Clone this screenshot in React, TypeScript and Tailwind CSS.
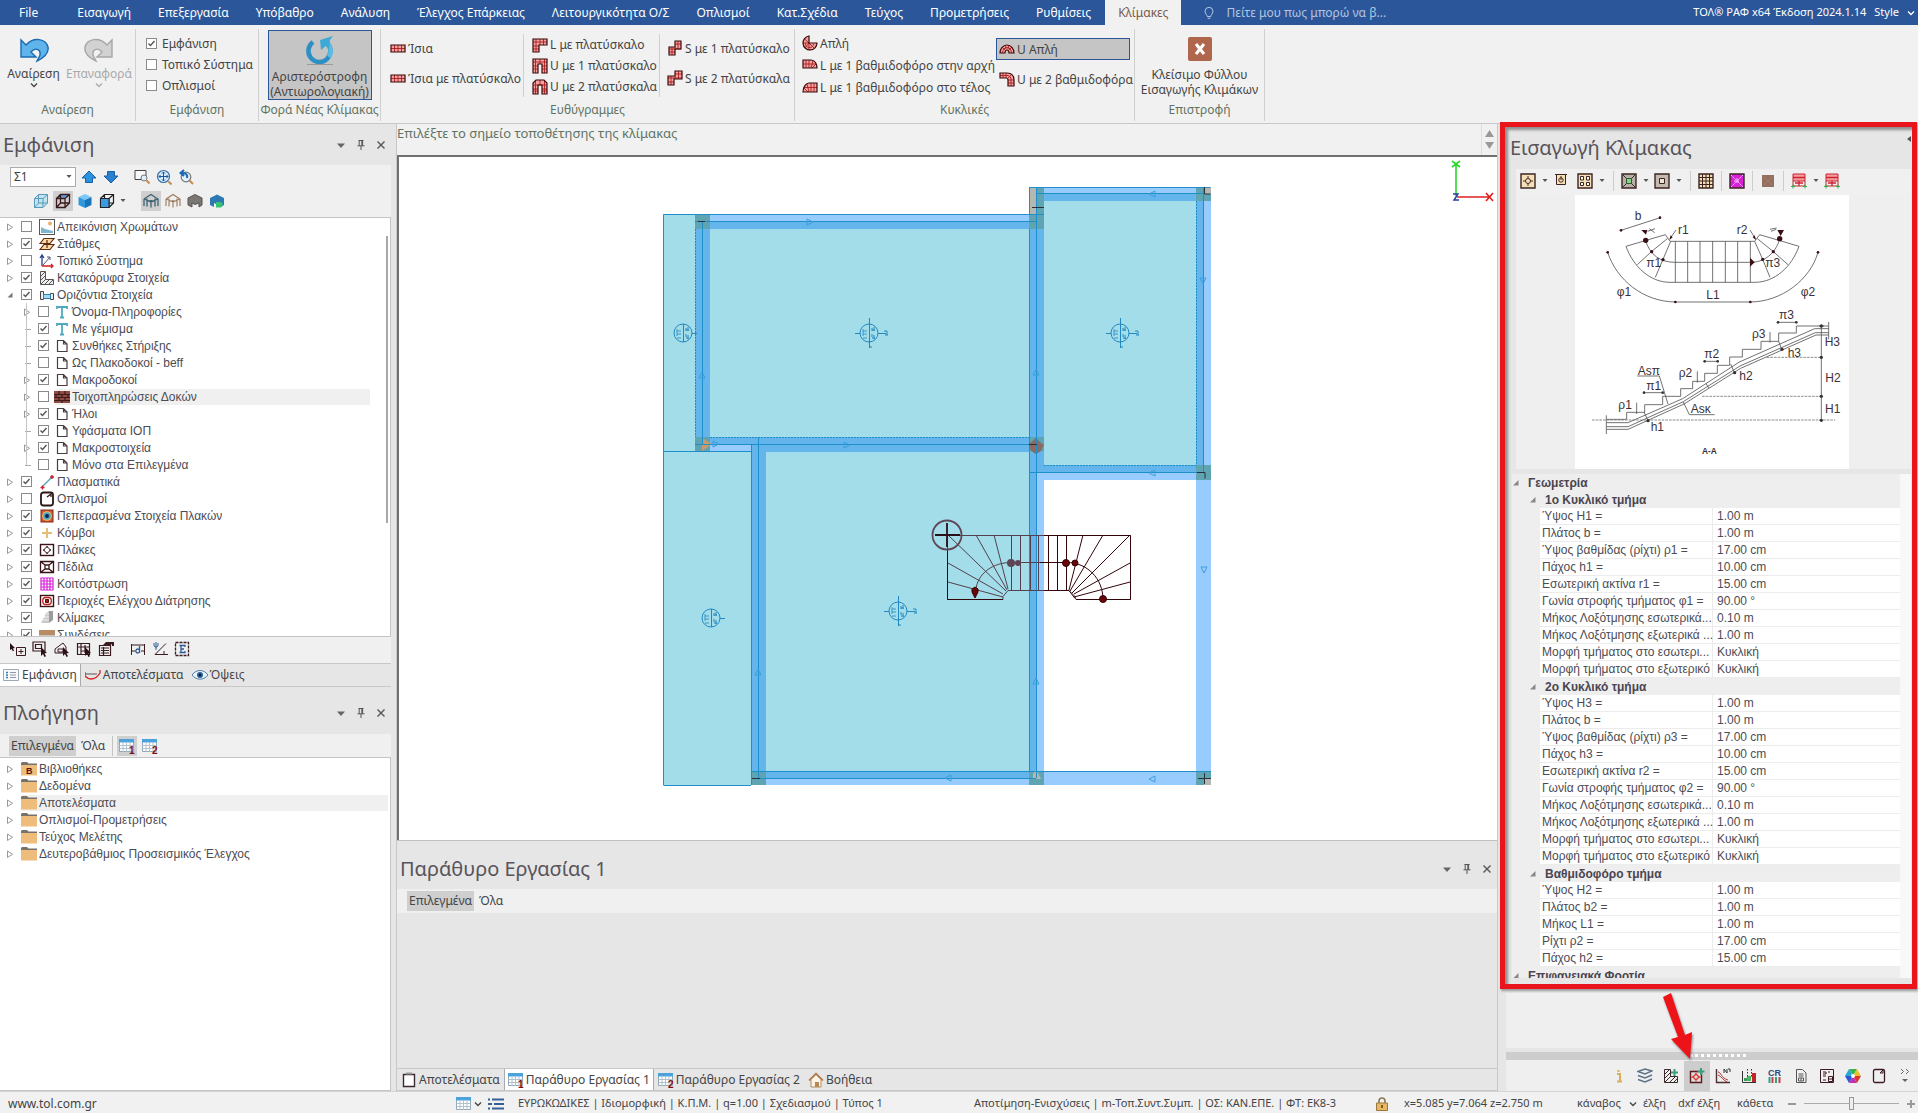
import { useState } from 'react';
import type { ReactNode } from 'react';

type IconProps = {
  children: ReactNode;
  size?: string;
  box?: string;
};

function Icon({ children, size = 'h-4 w-4', box = '0 0 16 16' }: IconProps) {
  return (
    <svg viewBox={box} className={`${size} shrink-0`} fill="none" aria-hidden="true">
      {children}
    </svg>
  );
}

/* ---------- small shared pieces ---------- */

function Chevron() {
  return (
    <Icon size="h-2 w-2" box="0 0 8 8">
      <path d="M1 2.500 4 5.500 7 2.500" stroke="currentColor" strokeWidth="1.3" />
    </Icon>
  );
}

function Caret() {
  return (
    <Icon size="h-1 w-2" box="0 0 8 4">
      <path d="M1.500 0h5L4 3z" fill="#555" />
    </Icon>
  );
}

function Tick({ label, checked, children }: { label: string; checked: boolean; children?: ReactNode }) {
  const [on, setOn] = useState(checked);
  return (
    <label className="flex items-center whitespace-nowrap">
      <span className="relative mr-[5px] block h-[11px] w-[11px] shrink-0">
        <input
          type="checkbox"
          checked={on}
          onChange={() => setOn(!on)}
          className="peer block h-[11px] w-[11px] appearance-none border border-[#8a8a8a] bg-white"
        />
        <svg
          viewBox="0 0 11 11"
          className="pointer-events-none absolute inset-0 hidden h-[11px] w-[11px] peer-checked:block"
          fill="none"
        >
          <path d="M2.500 5.500 4.500 7.500 8.500 3" stroke="#555" strokeWidth="1.4" />
        </svg>
      </span>
      {children}
      {label}
    </label>
  );
}

function PanelTitle({ title, height }: { title: string; height: string }) {
  return (
    <header className={`flex shrink-0 items-center justify-between bg-[#e6e6e6] pr-1 pl-[3px] ${height}`}>
      <h2 className="text-[20px] leading-6 text-[#58545a]">{title}</h2>
      <div className="flex items-center gap-2 text-[#555]">
        <button type="button" aria-label="Μενού">
          <Icon size="h-3 w-3" box="0 0 12 12">
            <path d="M2 4.500h8L6 9z" fill="#666" />
          </Icon>
        </button>
        <button type="button" aria-label="Καρφίτσωμα">
          <Icon size="h-3 w-3" box="0 0 12 12">
            <path d="M3.500 1.500h5M4.200 1.500v5.200M7.600 1.500v5.200M6.800 1.500v5.200M2.500 6.800h7M6 7v4" stroke="#555" />
          </Icon>
        </button>
        <button type="button" aria-label="Κλείσιμο">
          <Icon size="h-3 w-3" box="0 0 12 12">
            <path d="m2.500 2.500 7 7m0-7-7 7" stroke="#555" strokeWidth="1.4" />
          </Icon>
        </button>
      </div>
    </header>
  );
}

/* ---------- ribbon ---------- */

const tabs = [
  'Εισαγωγή',
  'Επεξεργασία',
  'Υπόβαθρο',
  'Ανάλυση',
  'Έλεγχος Επάρκειας',
  'Λειτουργικότητα Ο/Σ',
  'Οπλισμοί',
  'Κατ.Σχέδια',
  'Τεύχος',
  'Προμετρήσεις',
  'Ρυθμίσεις',
];

function TopBar() {
  return (
    <nav className="flex h-[25px] shrink-0 items-center bg-[#2b579a] pl-1 text-[12px] whitespace-nowrap text-white">
      <button type="button" className="mr-[11px] px-[15px]">
        File
      </button>
      {tabs.map((tab) => (
        <button type="button" key={tab} className="pr-[14px] pl-[13px]">
          {tab}
        </button>
      ))}
      <button type="button" className="h-full bg-[#f1f1f1] px-[13px] text-[#7a5a4a]">
        Κλίμακες
      </button>
      <label className="ml-[21px] flex items-center gap-[10px] text-[#a9bcdc]">
        <Icon size="h-[14px] w-[14px]">
          <path d="M6 12h4M6.500 14h3M6 12c0-2-2.500-3-2.500-6a4.500 4.500 0 0 1 9 0c0 3-2.500 4-2.500 6" stroke="#c6d3ea" />
        </Icon>
        <input
          type="text"
          aria-label="Αναζήτηση"
          placeholder="Πείτε μου πως μπορώ να β..."
          className="w-44 bg-transparent placeholder:text-[#b4c4e0] focus:outline-none"
        />
      </label>
      <span className="ml-auto text-[11px]">ΤΟΛ® ΡΑΦ x64 Έκδοση 2024.1.14</span>
      <button type="button" className="ml-2 flex items-center gap-2 pr-[3px] text-[11px]">
        Style <Chevron />
      </button>
    </nav>
  );
}

const stairShapes: Record<string, string> = {
  straight: 'M1 5h14v7H1z',
  l: 'M1 2h14v6H7v7H1z',
  u1: 'M1 1h14v14h-5V6H6v9H1z',
  u2: 'M1 15V4l3-3h8l3 3v11h-5V6H6v9z',
  s1: 'M2 15V7h6V1h6v8H8v6z',
  s2: 'M1 15V6h7V1h7v8H7v6z',
  fan: 'M7 1v7h8a7 7 0 1 1-8-7z',
  start: 'M1 3h8c4 0 6 4 6 8H1z',
  end: 'M1 13c0-5 3-9 6-9h8v9z',
  arch: 'M1 12a7 8 0 0 1 14 0h-5a2 3 0 0 0-4 0z',
  curve: 'M1 2h7c5 0 7 3 7 7v6H9V9c0-1-1-2-2-2H1z',
};

const stairGrid: Record<string, string> = {
  straight: 'M1 8.500h14M4.500 5v7M8 5v7M11.500 5v7',
  l: 'M1 5h14M4 2v13M8 2v6M11.500 2v6M1 9h6M1 12h6',
  u1: 'M1 4h14M3.500 1v14M12.500 1v14M8 1v5M1 8h5M1 11h5M10 8h5M10 11h5',
  u2: 'M1 6h14M3.500 2v13M12.500 2v13M8 1v5M1 10h5M10 10h5M1 12h5M10 12h5',
  s1: 'M11 1v8M2 9h12M5 7v8M8 4h6M2 12h6M8 7v2',
  s2: 'M11.500 1v8M1 8h14M4 6v9M8 4h7M1 12h6M8 6v3',
  fan: 'M7 8 2 3.500M7 8H1M7 8l-4 5M7 8v7M7 8l5 5M3.500 8a4 4 0 0 0 8 1',
  start: 'M1 7h13M4 3v8M7 3v8M9 11l2-7M10 11l4-4',
  end: 'M2 8.500h13M12 4v9M9 4v9M7 13 5 5M6 13 2 9',
  arch: 'M3.500 12a4.500 5.500 0 0 1 9 0M6 9 3 6M7 8 6 4M9 8l1-4M10 9l3-3',
  curve: 'M1 4.500h7c3 0 4 2 4 4V15M4 2v5M7 2v5M9 7l4-4M9 9h6M9 12h6',
};

function StairIcon({ kind }: { kind: string }) {
  return (
    <Icon>
      <path d={stairShapes[kind]} fill="#f0a3a3" />
      <path d={stairGrid[kind]} stroke="#b01c1c" strokeWidth="0.9" />
      <path d={stairShapes[kind]} stroke="#3c0a0a" strokeWidth="1.2" />
    </Icon>
  );
}

function StairButton({ kind, label, active }: { kind: string; label: string; active?: boolean }) {
  return (
    <button
      type="button"
      className={`flex h-[22px] items-center gap-[2px] border px-[2px] whitespace-nowrap ${active ? 'border-[#2b579a] bg-[#c5c5c5]' : 'border-transparent'}`}
    >
      <StairIcon kind={kind} />
      {label}
    </button>
  );
}

function RibbonGroup({ label, width, children }: { label: string; width: string; children: ReactNode }) {
  return (
    <section className={`flex h-[92px] shrink-0 flex-col border-r border-[#d0d0d0] ${width}`}>
      <div className="flex min-h-0 flex-1">{children}</div>
      <h3 className="h-[19px] text-center leading-4 whitespace-nowrap text-[#5f7463]">{label}</h3>
    </section>
  );
}

function Ribbon() {
  return (
    <div className="flex h-[99px] shrink-0 border-b border-[#c8c8c8] bg-[#f1f1f1] pt-1 text-[12px] leading-[15px] text-[#444]">
      <RibbonGroup label="Αναίρεση" width="w-[136px]">
        <button type="button" className="flex w-[67px] flex-col items-center pt-2">
          <Icon size="h-[26px] w-[30px]" box="0 0 30 26">
            <path
              d="M2 3v17h15l-5-5c4-5 10-3 9 3-1 3-2 4-3 6 8-4 12-9 11-14C27 2 15-1 7 8z"
              fill="#5fb4ec"
              stroke="#1c6bb0"
              strokeWidth="1.4"
            />
          </Icon>
          <span className="mt-[3px]">Αναίρεση</span>
          <Chevron />
        </button>
        <button type="button" className="flex w-[64px] flex-col items-center pt-2 text-[#aaa]">
          <Icon size="h-[26px] w-[30px]" box="0 0 30 26">
            <path
              d="M28 3v17H13l5-5c-4-5-10-3-9 3 1 3 2 4 3 6-8-4-12-9-11-14C3 2 15-1 23 8z"
              fill="#d2d2d2"
              stroke="#a6a6a6"
              strokeWidth="1.4"
            />
          </Icon>
          <span className="mt-[3px]">Επαναφορά</span>
          <Chevron />
        </button>
      </RibbonGroup>
      <RibbonGroup label="Εμφάνιση" width="w-[123px]">
        <div className="flex flex-col gap-[6px] pt-[7px] pl-[10px]">
          <Tick label="Εμφάνιση" checked />
          <Tick label="Τοπικό Σύστημα" checked={false} />
          <Tick label="Οπλισμοί" checked={false} />
        </div>
      </RibbonGroup>
      <RibbonGroup label="Φορά Νέας Κλίμακας" width="w-[122px]">
        <button
          type="button"
          className="mx-auto mt-px flex h-[70px] w-[104px] flex-col items-center justify-between border border-[#2b579a] bg-[#c5c5c5] pt-1"
        >
          <Icon size="h-[30px] w-[30px]" box="0 0 30 30">
            <path d="M8 7a11 11 0 1 0 14 1" stroke="#2d8fc4" strokeWidth="4.500" />
            <path d="M22 8a11 11 0 0 1 2 14" stroke="#5bbbe0" strokeWidth="4.500" />
            <path d="m15 5 13-4-3 4-1 10-3-4-5 4z" fill="#3fa9d6" />
            <path d="M2 29.500h26" stroke="#999" />
          </Icon>
          <span>
            Αριστερόστροφη
            <br />
            (Αντιωρολογιακή)
          </span>
        </button>
      </RibbonGroup>
      <RibbonGroup label="Ευθύγραμμες" width="w-[414px]">
        <div className="flex w-[142px] flex-col gap-2 pt-2 pl-[6px]">
          <StairButton kind="straight" label="Ίσια" />
          <StairButton kind="straight" label="Ίσια με πλατύσκαλο" />
        </div>
        <div className="my-[5px] flex w-[137px] flex-col border-x border-[#d0d0d0] pl-[5px]">
          <StairButton kind="l" label="L με πλατύσκαλο" />
          <StairButton kind="u1" label="U με 1 πλατύσκαλο" />
          <StairButton kind="u2" label="U με 2 πλατύσκαλα" />
        </div>
        <div className="flex flex-col gap-2 pt-2 pl-[4px]">
          <StairButton kind="s1" label="S με 1 πλατύσκαλο" />
          <StairButton kind="s2" label="S με 2 πλατύσκαλα" />
        </div>
      </RibbonGroup>
      <RibbonGroup label="Κυκλικές" width="w-[340px]">
        <div className="flex w-[201px] flex-col pt-[3px] pl-[4px]">
          <StairButton kind="fan" label="Απλή" />
          <StairButton kind="start" label="L με 1 βαθμιδοφόρο στην αρχή" />
          <StairButton kind="end" label="L με 1 βαθμιδοφόρο στο τέλος" />
        </div>
        <div className="flex w-[134px] flex-col gap-2 pt-[9px]">
          <StairButton kind="arch" label="U Απλή" active />
          <StairButton kind="curve" label="U με 2 βαθμιδοφόρα" />
        </div>
      </RibbonGroup>
      <RibbonGroup label="Επιστροφή" width="w-[130px]">
        <button type="button" className="flex w-full flex-col items-center gap-[6px] pt-2">
          <Icon size="h-6 w-6" box="0 0 24 24">
            <rect width="24" height="24" rx="2" fill="#b0664c" />
            <path d="m8 7 8 10m0-10L8 17" stroke="#fff" strokeWidth="3" />
          </Icon>
          <span>
            Κλείσιμο Φύλλου
            <br />
            Εισαγωγής Κλιμάκων
          </span>
        </button>
      </RibbonGroup>
    </div>
  );
}

/* ---------- display tree ---------- */

const page = <path d="M3.500 2.500h6l3.500 3.500v7.500h-9.500zM9.500 2.500v3.500h3.500" stroke="#4a3c40" strokeWidth="1.200" fill="#fff" />;
const letterT = <path d="M3 5V3h10v2M8 3v10.500M6 13.500h4" stroke="#4fa9bd" strokeWidth="1.800" />;

type Node = {
  label: string;
  icon: ReactNode;
  checked: boolean;
  leaf?: boolean;
  active?: boolean;
  children?: Node[];
};

const displayTree: Node[] = [
  {
    label: 'Απεικόνιση Χρωμάτων',
    checked: false,
    icon: (
      <>
        <rect x=".5" y=".5" width="15" height="15" fill="#fff" stroke="#555" />
        <path d="M2 14V8l4 2 4 1 4 1v2z" fill="#7cb6cf" />
        <circle cx="11" cy="4.500" r="2" fill="#e8b26a" />
      </>
    ),
  },
  {
    label: 'Στάθμες',
    checked: true,
    icon: (
      <path
        d="M1 7.500 5 2.500h10l-4 5zM1 13.500l4-5h10l-4 5zM8 4v8"
        fill="#fbd9a0"
        stroke="#5b2a10"
        strokeWidth="1.200"
      />
    ),
  },
  {
    label: 'Τοπικό Σύστημα',
    checked: false,
    icon: (
      <>
        <path d="M3 13V3M1 5l2-3 2 3" stroke="#26408c" strokeWidth="1.300" />
        <path d="M3 13h10M12 11l2 2-2 2" stroke="#d02020" strokeWidth="1.300" />
        <path d="M4 12 11 4M8 4h3v3" stroke="#557" />
      </>
    ),
  },
  {
    label: 'Κατακόρυφα Στοιχεία',
    checked: true,
    icon: <path d="M1.500 1.500h5v8h8v5h-13zM2 6l4-4M2 10l4-4M2 14l5-5M6 14l4-4M10 14l4-4" stroke="#555" fill="#eee" />,
  },
  {
    label: 'Οριζόντια Στοιχεία',
    checked: true,
    icon: (
      <>
        <path d="M1.500 4.500h3v8h-3zM11.500 6.500h3v6h-3z" fill="#eee" stroke="#444" />
        <path d="M4.500 7.500h7v4h-7z" fill="#a7d8ee" stroke="#2a7fb5" />
      </>
    ),
    children: [
      { label: 'Όνομα-Πληροφορίες', checked: false, icon: letterT },
      { label: 'Με γέμισμα', checked: true, icon: letterT, leaf: true },
      { label: 'Συνθήκες Στήριξης', checked: true, icon: page, leaf: true },
      { label: 'Ως Πλακοδοκοί - beff', checked: false, icon: page, leaf: true },
      { label: 'Μακροδοκοί', checked: true, icon: page },
      {
        label: 'Τοιχοπληρώσεις Δοκών',
        checked: false,
        active: true,
        icon: (
          <>
            <path d="M0 2h16v12H0z" fill="#8e4b45" />
            <path d="M0 5.500h16M0 8.500h16M0 11.500h16M5 2v3.500M11 2v3.500M2 6v2.500M8 6v2.500M14 6v2.500M5 9v2.500M11 9v2.500M8 12v2" stroke="#3b1a1a" strokeWidth="1.200" />
          </>
        ),
      },
      { label: 'Ήλοι', checked: true, icon: page },
      { label: 'Υφάσματα ΙΟΠ', checked: true, icon: page, leaf: true },
      { label: 'Μακροστοιχεία', checked: true, icon: page },
      { label: 'Μόνο στα Επιλεγμένα', checked: false, icon: page, leaf: true },
    ],
  },
  {
    label: 'Πλασματικά',
    checked: true,
    icon: (
      <>
        <path d="M3 13 13 3" stroke="#4c9fb0" strokeWidth="1.200" />
        <path d="M1.500 13.500h4M3.500 11.500v4M11 3h4M13 1v4" stroke="#c8202c" strokeWidth="1.400" />
      </>
    ),
  },
  {
    label: 'Οπλισμοί',
    checked: false,
    icon: (
      <>
        <rect x="2" y="1.500" width="12" height="13" rx="2.500" fill="#fff" stroke="#2b1518" strokeWidth="1.800" />
        <path d="m8 6 4-3v3" stroke="#2b1518" strokeWidth="1.300" />
      </>
    ),
  },
  {
    label: 'Πεπερασμένα Στοιχεία Πλακών',
    checked: true,
    icon: (
      <>
        <rect x="2" y="2" width="12" height="12" fill="#d9542f" stroke="#7e2a1c" />
        <circle cx="8" cy="8" r="4.800" fill="#e9c766" />
        <circle cx="8" cy="8" r="3.800" fill="#4aa5c0" />
        <circle cx="8" cy="8" r="2" fill="#12225a" />
      </>
    ),
  },
  { label: 'Κόμβοι', checked: true, icon: <path d="M8 3v10M3 8h10" stroke="#e6bd74" strokeWidth="2" /> },
  {
    label: 'Πλάκες',
    checked: true,
    icon: (
      <>
        <rect x="1.500" y="2.500" width="13" height="11" fill="#fff" stroke="#3b1418" strokeWidth="1.400" />
        <path d="m8 4.500 3.500 3.500L8 11.500 4.500 8zM8 4v2M8 10v2M4 8h2M10 8h2" stroke="#3b1418" />
      </>
    ),
  },
  {
    label: 'Πέδιλα',
    checked: true,
    icon: (
      <path d="M1.500 2.500h13v11h-13zM6 6h4v4H6zM1.500 2.500 6 6M14.500 2.500 10 6M1.500 13.500 6 10M14.500 13.500 10 10" fill="#fff" stroke="#3b1418" strokeWidth="1.300" />
    ),
  },
  {
    label: 'Κοιτόστρωση',
    checked: true,
    icon: <path d="M2 2h12v12H2zM5 2v12M8 2v12M11 2v12M2 5h12M2 8h12M2 11h12" stroke="#d81ed8" strokeWidth="1.200" />,
  },
  {
    label: 'Περιοχές Ελέγχου Διάτρησης',
    checked: true,
    icon: (
      <>
        <rect x="1.500" y="2.500" width="13" height="11" fill="#fff" stroke="#3b1418" strokeWidth="1.400" />
        <rect x="3.800" y="4.500" width="8.500" height="7" rx="3" stroke="#d01c1c" strokeWidth="1.300" />
        <path d="M6.500 6.500h3v3h-3z" fill="#a01c1c" stroke="#3b1418" />
      </>
    ),
  },
  {
    label: 'Κλίμακες',
    checked: true,
    icon: (
      <>
        <path d="M2 13h8V1L6 4v3L4 9z" fill="#c9c9c9" />
        <path d="M10 13V1h4v9z" fill="#9c9c9c" />
        <path d="M6 4h4M5 7h5M3 10h7" stroke="#eee" />
      </>
    ),
  },
  {
    label: 'Συνδέσεις',
    checked: true,
    icon: (
      <>
        <path d="M0 3h16v5H0z" fill="#b98d63" />
        <path d="M0 8h16v4H0z" fill="#c9c4bf" />
      </>
    ),
  },
];

function Expander({ open, leaf }: { open?: boolean; leaf?: boolean }) {
  return (
    <Icon size="h-2 w-2 mr-[7px]" box="0 0 8 8">
      {leaf ? (
        <path d="M2 4.500h6" stroke="#aaa" />
      ) : open ? (
        <path d="M6.500 1.500v5h-5z" fill="#777" />
      ) : (
        <path d="M1.500 1v6.500l5-3.250z" stroke="#999" fill="#fff" />
      )}
    </Icon>
  );
}

function TreeRow({ node, depth = 0 }: { node: Node; depth?: number }) {
  return (
    <li>
      <div className={`flex h-[17px] items-center ${depth ? 'pl-[23px]' : 'pl-[6px]'}`}>
        <Expander open={!!node.children} leaf={node.leaf} />
        <div className={`flex flex-1 ${node.active ? 'mr-5 bg-gradient-to-r from-transparent from-5% to-[#f0f0f0] to-5%' : ''}`}>
          <Tick label={node.label} checked={node.checked}>
            <span className={`mr-[2px] ${depth ? '' : 'ml-[2px]'}`}>
              <Icon>{node.icon}</Icon>
            </span>
          </Tick>
        </div>
      </div>
      {node.children && (
        <ul className="relative">
          <span className="absolute top-0 left-[26px] h-[162px] border-l border-[#c4c4c4]" />
          {node.children.map((child) => (
            <TreeRow key={child.label} node={child} depth={depth + 1} />
          ))}
        </ul>
      )}
    </li>
  );
}

const cubeEdges = 'M1.500 5.500h8.500v9H1.500zM1.500 5.500 5.500 1.500h9v8.500l-4.500 4.500M10 5.500l4.500-4M5.500 1.500V10h9M5.500 10l-4 4.500';
const houseEdges = 'M1 6 8 1.500 15 6v7M1 6v7M4 5.500v8M8 7v7.500M12 5.500v8M1 6l7 3 7-3M5 8h6';

const viewIcons: { name: string; active?: boolean; art: ReactNode }[] = [
  {
    name: 'Διαφανές',
    art: (
      <>
        <path d="M1.500 5.500 5.500 1.500h9v8.500l-4.500 4.500H1.500z" fill="#c2e4f1" />
        <path d={cubeEdges} stroke="#5a9ab8" />
      </>
    ),
  },
  {
    name: 'Σκελετός',
    active: true,
    art: (
      <>
        <path d="M1.500 5.500 5.500 1.500h9l-4.500 4z" fill="#5fa4e6" />
        <path d={cubeEdges} stroke="#3a1a1a" strokeWidth="1.300" />
      </>
    ),
  },
  {
    name: 'Στερεό',
    art: (
      <>
        <path d="M1.500 4 8 1l6.500 3L8 7z" fill="#7cc8f4" />
        <path d="M1.500 4 8 7v8l-6.500-3z" fill="#2f98dc" />
        <path d="M14.500 4 8 7v8l6.500-3z" fill="#1674b8" />
      </>
    ),
  },
  {
    name: 'Όψη',
    art: (
      <>
        <path d={cubeEdges} stroke="#222" strokeWidth="1.200" />
        <path d="M1.500 5.500h8.500v9H1.500z" fill="#3a9be0" stroke="#222" />
      </>
    ),
  },
];

function DisplayPanel() {
  return (
    <section className="flex min-h-0 flex-[567] flex-col">
      <PanelTitle title="Εμφάνιση" height="h-[41px]" />
      <div className="flex h-[53px] shrink-0 flex-col gap-[3px] border-b border-[#c4c4c4] bg-[#f0f0f0] pt-[1px]">
        <div className="flex h-[22px] items-center pl-[10px]">
          <select
            aria-label="Στάθμη"
            className="h-5 w-[66px] appearance-none border border-[#ababab] bg-white pl-[3px] text-[12px] leading-4 text-[#444]"
          >
            <option>Σ1</option>
          </select>
          <span className="pointer-events-none relative right-[11px] w-0">
            <Caret />
          </span>
          <button type="button" aria-label="Πάνω" className="ml-[5px]">
            <Icon>
              <path d="M8 2 15 9h-3.500v4.500h-7V9H1z" fill="#2a93e0" stroke="#1b5fa6" />
            </Icon>
          </button>
          <button type="button" aria-label="Κάτω" className="ml-[6px]">
            <Icon>
              <path d="M8 14 1 7h3.500V2.500h7V7H15z" fill="#2a80cc" stroke="#1b5fa6" />
            </Icon>
          </button>
          <button type="button" aria-label="Ζουμ περιοχής" className="ml-[15px]">
            <Icon>
              <path d="M1 1.500h11v9H1z" stroke="#444" fill="#f8f8f8" />
              <circle cx="10" cy="9" r="3" fill="#dceefa" stroke="#777" />
              <path d="m12.500 11.500 3 3" stroke="#c98a4a" strokeWidth="2" />
            </Icon>
          </button>
          <button type="button" aria-label="Ζουμ όλα" className="ml-[6px]">
            <Icon>
              <circle cx="7.500" cy="7.500" r="6" fill="#d6ecfb" stroke="#3d6fa5" strokeWidth="1.200" />
              <path d="M7.500 3v9M3 7.500h9M6 4.500 7.500 3 9 4.500M6 10.500 7.500 12 9 10.500M4.500 6 3 7.500 4.500 9M10.500 6 12 7.500 10.500 9" stroke="#1a55a5" />
              <path d="m12.500 12.500 3 3" stroke="#c98a4a" strokeWidth="2" />
            </Icon>
          </button>
          <button type="button" aria-label="Προηγούμενο ζουμ" className="ml-[6px]">
            <Icon>
              <circle cx="8" cy="8" r="4.800" fill="#e4f1fa" stroke="#777" strokeWidth="1.200" />
              <path d="M9 9c1-4-2-5-5-5M6 1 2.500 4 6 7" stroke="#1a67b8" strokeWidth="2" />
              <path d="m11.500 11.500 3.500 3.500" stroke="#c98a4a" strokeWidth="2" />
            </Icon>
          </button>
        </div>
        <div className="flex h-5 items-center pl-[31px]">
          {viewIcons.map(({ name, active, art }) => (
            <button type="button" key={name} aria-label={name} className={`mr-[2px] p-[2px] ${active ? 'bg-[#cfcfcf]' : ''}`}>
              <Icon>{art}</Icon>
            </button>
          ))}
          <Caret />
          <button type="button" aria-label="Φορέας" className="ml-[14px] bg-[#cfcfcf] p-[2px]">
            <Icon>
              <path d={houseEdges} stroke="#3d6070" strokeWidth="1.300" />
            </Icon>
          </button>
          <button type="button" aria-label="Μοντέλο" className="ml-[2px] p-[2px]">
            <Icon>
              <path d={houseEdges} stroke="#9a7a5a" strokeWidth="1.100" />
            </Icon>
          </button>
          <button type="button" aria-label="Σκίαση" className="ml-[2px] p-[2px]">
            <Icon>
              <path d="M1 5 8 1.500 15 5v7l-3 2v-4l-4 1.500-3-1.500v4l-4-2z" fill="#7a7673" stroke="#57534f" />
            </Icon>
          </button>
          <button type="button" aria-label="Υλικά" className="ml-[2px] p-[2px]">
            <Icon>
              <path d="M1 5 8 1.500 15 5v7l-3 2v-4l-4 1.500-3-1.500v4l-4-2z" fill="#2c79b4" />
              <path d="M7 9h5l2 2-2 3.500H7z" fill="#35c470" />
            </Icon>
          </button>
        </div>
      </div>
      <div className="relative min-h-0 flex-1 overflow-hidden border-r border-b border-[#c4c4c4] bg-white">
        <ul className="font-['Liberation_Sans',sans-serif] text-[12px] leading-4 text-[#4c4c54]">
          {displayTree.map((node) => (
            <TreeRow key={node.label} node={node} />
          ))}
        </ul>
        <div className="absolute top-[18px] right-[2px] h-[287px] w-[2px] bg-[#a8a8a8]" />
      </div>
      <div className="flex h-[27px] shrink-0 items-center gap-[6px] border-b border-[#c8c8c8] bg-[#f0f0f0] pb-[2px] pl-[10px]">
        {selectTools.map((tool) => (
          <button type="button" key={tool.name} aria-label={tool.name} className={tool.gap ? 'ml-[10px]' : ''}>
            <Icon>{tool.art}</Icon>
          </button>
        ))}
      </div>
      <div className="flex h-[23px] shrink-0 items-center border-b border-[#c8c8c8] bg-[#e6e6e6] text-[12px] text-[#444]">
        <button type="button" className="flex h-[22px] items-center gap-[3px] border-r border-[#aaa] bg-white px-[3px]">
          <Icon>
            <path d="M.5 2.500h15v11H.5z" fill="#fafafa" stroke="#9ab" />
            <path d="M3 5.500h2M3 8h2M3 10.500h2" stroke="#2f80b8" strokeWidth="1.500" />
            <path d="M7 5.500h6M7 8h6M7 10.500h6" stroke="#8a98a5" />
          </Icon>
          Εμφάνιση
        </button>
        <button type="button" className="ml-[4px] flex items-center gap-[2px]">
          <Icon>
            <path d="M0 5v4c2 2 3 3 6 3s6-1 9-6V3" stroke="#d82020" strokeWidth="1.300" />
            <path d="M0 7h12" stroke="#555" />
          </Icon>
          Αποτελέσματα
        </button>
        <button type="button" className="ml-[8px] flex items-center gap-[2px]">
          <Icon>
            <path d="M0 8c4-6 12-6 16 0-4 5.500-12 5.500-16 0z" fill="#e8f2f8" stroke="#4d7fa8" />
            <circle cx="8" cy="8" r="3" fill="#2a5f94" />
            <circle cx="8" cy="8" r="1.200" fill="#0c1c30" />
          </Icon>
          Όψεις
        </button>
      </div>
    </section>
  );
}

const cursor = <path d="m9 6 6 6-2.500.3 1.500 3-1.500.7-1.500-3-2 2z" fill="#2b1015" />;

const selectTools: { name: string; gap?: boolean; art: ReactNode }[] = [
  {
    name: 'Επιλογή',
    art: (
      <>
        <path d="m0 2 5 5-2 .3 1 2.500-1.200.5L1.700 8 0 9z" fill="#2b1015" />
        <path d="M6.500 6.500h9v8h-9zM11 8v5M8.500 10.500h5" stroke="#3b1a20" />
      </>
    ),
  },
  {
    name: 'Επιλογή με παράθυρο',
    art: (
      <>
        <path d="M1 1h12v9H1zM3.500 3.500h6v4h-6z" stroke="#3b1a20" strokeWidth="1.200" />
        {cursor}
      </>
    ),
  },
  {
    name: 'Επιλογή με πολύγωνο',
    art: (
      <>
        <path d="M1 12V8l8-6 3 4v6zM4 8h5v3H4z" stroke="#3b1a20" />
        {cursor}
      </>
    ),
  },
  {
    name: 'Επιλογή ομάδας',
    art: (
      <>
        <path d="M1.500 2.500h12v11h-12zM5 2v12M1.500 6h12M5 10h5M9 4v8" stroke="#3b1a20" strokeWidth="1.200" />
        {cursor}
      </>
    ),
  },
  {
    name: 'Ιδιότητες',
    art: (
      <>
        <path d="M1.500 4.500h11v10h-11zM3 7h8M3 9.500h8M3 12h8M5.500 6v8" stroke="#3b1a20" strokeWidth="1.200" />
        <path d="m5 4 3-3h8v4h-2V3l-3 2z" fill="#3b1a20" />
      </>
    ),
  },
  {
    name: 'Διαστάσεις',
    gap: true,
    art: (
      <>
        <path d="M1.500 3v11M14.500 3v11M1.500 4h13M2 10h3M11 10h3" stroke="#3b1a20" />
        <path d="M9.500 5v7M9.500 9a2 2 0 1 0 0 2" stroke="#2a5a96" strokeWidth="1.300" />
      </>
    ),
  },
  {
    name: 'Γωνία',
    art: (
      <>
        <path d="m3 13.500 11-11M3 13.500h13M12 10v3" stroke="#3b1a20" />
        <path d="M2 2c0 3 0 4 2 4s2-1 2-4M4 1v8" stroke="#2a5a96" />
      </>
    ),
  },
  {
    name: 'Εμβαδόν',
    art: (
      <>
        <path d="M1.500 1.500h13v13h-13z" stroke="#3b1a20" strokeWidth="1.300" strokeDasharray="3 1" />
        <path d="M11 6V4.500H5.500M7 4.500v7M5.500 11.500H11V10M7 8h3" stroke="#2a5a96" strokeWidth="1.300" />
      </>
    ),
  },
];

/* ---------- navigation ---------- */

function SheetIcon({ digit }: { digit?: string }) {
  return (
    <Icon>
      <path d="M.5 1.500h14v12H.5z" fill="#fff" stroke="#8fa7b8" />
      <path d="M0 1h15v3.500H0z" fill="#4aa3dc" />
      <path d="M.5 7.500h14M.5 10.500h14M4 4v10M7.500 4v10M11 4v10" stroke="#b3c1cc" />
      {digit && (
        <text x="10" y="15.500" fontSize="10" fontWeight="700" fill="#7a0c12" fontFamily="Liberation Sans, sans-serif">
          {digit}
        </text>
      )}
    </Icon>
  );
}

function FilterButtons() {
  return (
    <>
      <button type="button" className="h-5 bg-[#cfcfcf] px-[2px]">
        Επιλεγμένα
      </button>
      <button type="button" className="ml-[5px]">
        Όλα
      </button>
    </>
  );
}

const folders = [
  'Βιβλιοθήκες',
  'Δεδομένα',
  'Αποτελέσματα',
  'Οπλισμοί-Προμετρήσεις',
  'Τεύχος Μελέτης',
  'Δευτεροβάθμιος Προσεισμικός Έλεγχος',
];

function NavigationPanel() {
  return (
    <section className="flex min-h-0 flex-[401] flex-col bg-[#e6e6e6] pt-[5px]">
      <PanelTitle title="Πλοήγηση" height="h-[42px]" />
      <div className="flex h-6 shrink-0 items-center border-b border-[#c4c4c4] bg-[#f0f0f0] pl-[9px] text-[12px] text-[#444]">
        <FilterButtons />
        <div className="ml-[7px] flex items-center border-l border-[#c4c4c4] pl-1">
          <button type="button" aria-label="Παράθυρο 1" className="bg-[#cfcfcf] p-[2px]">
            <SheetIcon digit="1" />
          </button>
          <button type="button" aria-label="Παράθυρο 2" className="ml-[3px] p-[2px]">
            <SheetIcon digit="2" />
          </button>
        </div>
      </div>
      <ul className="min-h-0 flex-1 border-r border-b border-[#c4c4c4] bg-white pt-[2px] pr-[2px] font-['Liberation_Sans',sans-serif] text-[12px] leading-4 text-[#4c4c54]">
        {folders.map((name, i) => (
          <li key={name} className="flex h-[17px] items-center pl-[6px]">
            <Expander />
            <a href="#" className={`flex flex-1 items-center gap-[2px] ${i === 2 ? 'bg-[#f0f0f0]' : ''}`}>
              <Icon>
                <path d="M0 3V2l1-1h5l1.500 1.500H16V4H0z" fill="#77726c" />
                <path d="M0 4h16v10.500H0z" fill="#eebd7c" />
                {i === 0 && (
                  <text x="5" y="12.500" fontSize="9" fontWeight="700" fill="#5a1010" fontFamily="Liberation Sans, sans-serif">
                    B
                  </text>
                )}
              </Icon>
              {name}
            </a>
          </li>
        ))}
      </ul>
    </section>
  );
}

/* ---------- drawing canvas ---------- */

const slabMarks = [
  { x: 683, y: 333, name: 'Π2', cross: false },
  { x: 869, y: 333, name: 'Π5', cross: true },
  { x: 1120, y: 333, name: 'Π6', cross: true },
  { x: 711, y: 618, name: 'Π4', cross: false },
  { x: 898, y: 611, name: 'Π3', cross: true },
];

const beamArrows: [number, number, number][] = [
  [810, 222, 0],
  [1152, 194, 180],
  [847, 445, 0],
  [716, 444, 0],
  [1152, 473, 180],
  [948, 778, 180],
  [1152, 779, 180],
  [702, 375, -90],
  [1036, 372, -90],
  [1203, 281, 90],
  [758, 672, -90],
  [1036, 681, -90],
  [1204, 570, 90],
];

function PlanDrawing() {
  return (
    <svg viewBox="399 157 1098 683" preserveAspectRatio="xMidYMid meet" className="h-full w-full" fill="none">
      {/* slabs */}
      <path d="M663 214h381v237H663zM1036 187h168v286h-168zM663 451h373v334H663z" fill="#a2dde9" />
      {/* beams, outer half */}
      <g fill="#99ccfe">
        <path d="M695 214h349v8H695zM1036 187h175v7h-175zM1204 187h7v598h-7zM710 444h41v7h-41z" />
        <path d="M1029 473h182v7h-182zM1036 480h8v305h-8zM1196 480h15v305h-15zM751 771h460v14H751z" />
      </g>
      {/* beams, over the slabs */}
      <g fill="#63b5ec">
        <path d="M695 221h349v8H695zM695 214h15v230h-15zM1029 187h15v286h-15zM1044 194h152v7h-152z" />
        <path d="M1196 194h8v279h-8zM695 437h349v7H695zM751 444h285v8H751zM1044 465h160v8h-160z" />
        <path d="M751 444h15v341h-15zM1029 465h7v320h-7zM751 771h285v7H751z" />
      </g>
      {/* columns */}
      <g fill="#5fa4b2">
        <path d="M695 214h15v15h-15zM1029 187h15v42h-15zM1196 187h15v14h-15zM695 437h15v14h-15z" />
        <path d="M1029 437h15v14h-15zM1196 465h15v15h-15zM751 771h15v14h-15zM1029 771h15v14h-15zM1196 771h15v14h-15z" />
      </g>
      <path d="M1030 188h6v26h-6zM1204 187h7v7h-7zM1204 779h7v6h-7zM1033 774l3-5 5 10h-8z" fill="#b5b8b2" />
      <path d="m702 438 10 6-10 7z" fill="#c89a70" />
      <path d="M1029 444h15l-3 7-5 3-5-3zM1029 444l7-6 6 6z" fill="#8a6a62" />

      {/* outlines */}
      <g stroke="#1e8fc8">
        <path d="M663.500 785V214.500H1044M663.500 451.500H751M663.500 785.500H751M1029.500 214V187.500h181" />
        <path d="M702.500 221v223M695 221.500h341M1036.500 187v591M1036 193.500h168M1203.500 187v286" />
        <path d="M695 444.500h341M1029 472.500h175M758.500 438v340M751 778.500h285M751 771.500h460M751.500 444v341" />
        <path d="M1029.500 229v542" />
        <path d="M695.500 229v208M710 437.500h319M1044 465.500h152M1196.500 201v264" strokeDasharray="2 1" />
      </g>
      <path d="M1032 207.500h12M1029 444.500h8M1204.500 187v7h6M1197 472.500h8v6M1198 778.500h13M1204.500 773v11M752 778.500h8M698 221.500h7" stroke="#2b3038" />

      {beamArrows.map(([x, y, turn]) => (
        <path key={`${x}-${y}`} d="M-3-3v6l6-3z" stroke="#3a9fdc" transform={`translate(${x} ${y}) rotate(${turn})`} />
      ))}

      {slabMarks.map(({ x, y, name, cross }) => (
        <g key={name} transform={`translate(${x} ${y})`} stroke="#2388c0">
          <circle r="9" />
          <path d="M.5-9V9M9 .5h5M3-5v3M5-6v4M3 1v3M5 2v4M3-3h3M3 5h3" />
          <path d="M-6-2h4M-6 1h4M-6-4v7M-6 5h4" strokeWidth="0.800" />
          {cross && <path d="M.5-15v6M.5 9v6M-14 .5h5M14 .5h3M15-2h3M18-2v4M16 2h3M2 13v2" />}
        </g>
      ))}

      {/* stair being placed */}
      <g stroke="#54404e">
        <path d="M947.500 599V535.500h183V599.500H1076l-1-3-6-6H1008l-5 6v3h-55.500z" />
        <path d="M1011.500 535v55M1020.500 535v55M1030.500 535v55M1038.500 535v55" />
        <path d="m976 535 31 55M994 535l14 54M948 535l58 56M948 563l55 31M948 582l55 15" />
        <path d="M976 590c1-16 17-28 36-27.500h54" />
      </g>
      <g stroke="#33050a">
        <path d="M1044 535.500h86.500v64H1076M1044 590.500h25l6 8M1048.500 535v55M1057.500 535v55M1066.500 535v55" />
        <path d="m1083 535-14 55M1103 535l-33 56M1130 535l-58 58M1130 563l-56 31M1130 582l-56 15M947.500 550v49.500H1003" />
        <path d="M1040 562.500h27c20 0 36 16 36 37" />
      </g>
      <g fill="#5d4555">
        <circle cx="1011" cy="563" r="4" />
        <circle cx="1018" cy="563" r="3" />
      </g>
      <g fill="#6a0508" stroke="#33050a">
        <circle cx="1066" cy="563" r="3.500" />
        <circle cx="1075" cy="563" r="3" />
        <circle cx="1103" cy="599" r="3.500" />
        <path d="m972 589 3-2 3 2v3l-3 6-3-6z" />
      </g>
      <circle cx="947" cy="535" r="14.500" stroke="#5f4656" strokeWidth="1.800" />
      <path d="M947 523v24M935 535h25" stroke="#2a1018" strokeWidth="1.800" />

      {/* axes */}
      <path d="M1456 196v-32M1452 161l8 6m0-6-8 6" stroke="#2bd52b" strokeWidth="1.600" />
      <path d="M1457 197h32M1486 193l7 8m0-8-7 8" stroke="#e02020" strokeWidth="1.600" />
      <path d="M1453 194h5l-4 6h5" stroke="#2040a0" strokeWidth="1.400" />
    </svg>
  );
}

function Workspace() {
  return (
    <main className="flex min-w-0 flex-1 flex-col border-x border-[#c8c8c8]">
      <div className="flex h-[31px] shrink-0 bg-[#f1f1f1] text-[13px] text-[#5f7463]">
        <p className="flex-1 leading-[18px]">Επιλέξτε το σημείο τοποθέτησης της κλίμακας</p>
        <div className="flex w-4 flex-col items-center justify-center gap-[5px] border-l border-[#ddd]">
          <button type="button" aria-label="Πάνω">
            <Icon size="h-[7px] w-[9px]" box="0 0 9 7">
              <path d="M0 7h9L4.500 0z" fill="#999" />
            </Icon>
          </button>
          <button type="button" aria-label="Κάτω">
            <Icon size="h-[7px] w-[9px]" box="0 0 9 7">
              <path d="M0 0h9L4.500 7z" fill="#999" />
            </Icon>
          </button>
        </div>
      </div>
      <div className="min-h-0 flex-1 border-t-2 border-l-2 border-[#707070] bg-white">
        <PlanDrawing />
      </div>
      <section className="flex h-[251px] shrink-0 flex-col border-t border-[#c0c0c0] bg-[#e6e6e6] pt-[7px]">
        <PanelTitle title="Παράθυρο Εργασίας 1" height="h-[41px]" />
        <div className="flex h-6 shrink-0 items-center bg-[#f0f0f0] pl-[10px] text-[12px] text-[#444]">
          <FilterButtons />
        </div>
        <div className="flex-1" />
        <div className="flex h-[23px] shrink-0 items-center border-y border-[#c8c8c8] text-[12px] text-[#444]">
          <button type="button" className="flex items-center gap-[2px] px-[4px]">
            <Icon>
              <path d="M2.500 2.500h11v12h-11z" fill="#fff" stroke="#3b2a30" strokeWidth="1.400" />
              <path d="M5 1.500h6" stroke="#999" strokeWidth="2" />
            </Icon>
            Αποτελέσματα
          </button>
          <button type="button" className="flex h-[21px] items-center gap-[2px] border-x border-[#aaa] bg-white px-[3px]">
            <SheetIcon digit="1" />
            Παράθυρο Εργασίας 1
          </button>
          <button type="button" className="flex items-center gap-[2px] px-[4px]">
            <SheetIcon digit="2" />
            Παράθυρο Εργασίας 2
          </button>
          <button type="button" className="flex items-center gap-[2px] px-[4px]">
            <Icon>
              <path d="M3 7.500V15h10V7.500L8 2.500z" fill="#fdf3e4" stroke="#b58a5a" />
              <path d="m1 8.500 7-7 7 7" stroke="#a87444" strokeWidth="1.500" />
              <path d="M7 10h4v5H7z" fill="#b58a5a" />
            </Icon>
            Βοήθεια
          </button>
        </div>
      </section>
    </main>
  );
}

/* ---------- stair properties ---------- */

const turnTop: [string, string][] = [
  ['Εσωτερική ακτίνα r', '15.00 cm'],
  ['Γωνία στροφής τμήματος φ', '90.00 °'],
];

const turnBottom: [string, string][] = [
  ['Μήκος Λοξότμησης εσωτερικά...', '0.10 m'],
  ['Μήκος Λοξότμησης εξωτερικά ...', '1.00 m'],
  ['Μορφή τμήματος στο εσωτερι...', 'Κυκλική'],
  ['Μορφή τμήματος στο εξωτερικό', 'Κυκλική'],
];

const turnRows = (h: number, r: number): [string, string][] => [
  [`Ύψος H${h} =`, '1.00 m'],
  ['Πλάτος b =', '1.00 m'],
  [`Ύψος βαθμίδας (ρίχτι) ρ${h} =`, '17.00 cm'],
  [`Πάχος h${h} =`, '10.00 cm'],
  ...turnTop.map(([name, value]): [string, string] => [`${name}${r} =`, value]),
  ...turnBottom,
];

const sections: { title: string; rows: [string, string][] }[] = [
  { title: '1ο Κυκλικό τμήμα', rows: turnRows(1, 1) },
  { title: '2ο Κυκλικό τμήμα', rows: turnRows(3, 2) },
  {
    title: 'Βαθμιδοφόρο τμήμα',
    rows: [
      ['Ύψος H2 =', '1.00 m'],
      ['Πλάτος b2 =', '1.00 m'],
      ['Μήκος L1 =', '1.00 m'],
      ['Ρίχτι ρ2 =', '17.00 cm'],
      ['Πάχος h2 =', '15.00 cm'],
    ],
  },
];

function GridHead({ title, nested }: { title: string; nested?: boolean }) {
  return (
    <tr>
      <th colSpan={3} scope="colgroup" className="h-[17px] bg-[#eeeeee] p-0 text-left font-bold text-[#4a4550]">
        <span className={`flex items-center ${nested ? 'pl-[18px]' : 'pl-[1px]'}`}>
          <Icon size="h-[6px] w-[6px]" box="0 0 6 6">
            <path d="M5.500 0v5.500H0z" fill="#888" />
          </Icon>
          <span className="ml-[9px]">{title}</span>
        </span>
      </th>
    </tr>
  );
}

function PropertyGrid() {
  return (
    <div className="mt-[5px] mr-[7px] ml-[14px] min-h-0 flex-1 overflow-hidden bg-[#f8f8f8]">
      <table className="w-[calc(100%-11px)] table-fixed border-separate border-spacing-0 bg-white font-['Liberation_Sans',sans-serif] text-[12px] leading-4 text-[#4c4c54]">
        <colgroup>
          <col className="w-[28px]" />
          <col className="w-[173px]" />
          <col />
        </colgroup>
        <tbody>
          <GridHead title="Γεωμετρία" />
          {sections.map((section) => (
            <PropertySection key={section.title} {...section} />
          ))}
          <GridHead title="Επιφανειακά Φορτία" />
        </tbody>
      </table>
    </div>
  );
}

function PropertySection({ title, rows }: { title: string; rows: [string, string][] }) {
  return (
    <>
      <GridHead title={title} nested />
      {rows.map(([name, value]) => (
        <tr key={name}>
          <td className="bg-[#eeeeee] p-0" />
          <th
            scope="row"
            className="h-[17px] border-r border-b border-[#ececec] p-0 pl-[2px] text-left font-normal whitespace-nowrap"
          >
            {name}
          </th>
          <td className="border-b border-[#ececec] p-0 pl-[4px]">{value}</td>
        </tr>
      ))}
    </>
  );
}

function StairDiagram() {
  return (
    <svg viewBox="465 225 822 822" className="h-[274px] w-[274px] bg-white" fill="none">
      <g stroke="#555" strokeWidth="2.500">
        {/* plan */}
        <path d="M750 364H1004M750 487H1004M766 364v123M803 364v123M840 364v123M878 364v123M916 364v123M953 364v123M991 364v123" />
        <path d="M618 379 736 344 750 364M618 379C640 440 690 487 750 487M694 395 742 356M652 434 694 395M729 418 752 364M706 472 729 418" />
        <path d="M1137 379 1019 344 1004 364M1137 379C1115 440 1065 487 1004 487M1060 395 1012 356M1104 434 1060 395M1028 418 1004 364M1050 472 1028 418" />
        <path d="M676 360C690 405 720 427 766 427H991C1030 427 1065 405 1080 355" />
        <path d="M563 397C590 480 670 545 766 546H991C1085 545 1170 480 1194 397M603 331 721 293M750 356 768 330M1006 356 990 330" />
        <path d="m683 334 22-8M688 326l16 12M1050 328l20-4M1053 334l16-6" />
      </g>
      <g fill="#3a1015">
        <path d="m990 413 14 14-14 13zM664 330h18l-4 14zM1072 330h20l-10 18z" />
        <circle cx="677" cy="361" r="8" />
        <circle cx="1079" cy="356" r="8" />
        <circle cx="695" cy="395" r="5" />
        <circle cx="1060" cy="395" r="5" />
        <circle cx="729" cy="419" r="5" />
        <circle cx="1028" cy="418" r="5" />
        <circle cx="563" cy="397" r="4" />
        <circle cx="1194" cy="397" r="4" />
        <circle cx="766" cy="546" r="4" />
        <circle cx="991" cy="546" r="4" />
        <circle cx="603" cy="331" r="4" />
        <circle cx="720" cy="293" r="4" />
        <path d="m748 360 4-14 6 6zM1008 360l-4-14-6 6z" />
      </g>

      {/* section */}
      <g stroke="#555" strokeWidth="2.500">
        <path d="M560 898h60v-21h54v-23h54v-25h54v-23h36v-22h36v-24h38v-24h37v-25h38v-23h56v-24h53v-25h53v-21h96" />
        <path d="M560 908h64L788 836 958 726 1184 626h42M560 920h64L790 845 960 738 1186 638h40M560 928h64L792 852 962 745 1188 645h38" />
        <path d="M559 886v56M1226 606v52M1204 618v284M1196 618h16" />
        <path d="M672 818h56M854 724h39M1074 607h55M650 848v34M832 754v34M1050 636v32M672 876l12 26M932 732l12 28M1076 664l10 26M858 790l8 14" />
        <path d="M652 768h66l26 84M790 846l18 38h76" />
      </g>
      <path d="M516 900h730M846 829h358M1040 712h164" stroke="#777" strokeWidth="2.500" strokeDasharray="8 3" />
      <g fill="#333">
        <circle cx="672" cy="818" r="4" />
        <circle cx="728" cy="818" r="4" />
        <circle cx="854" cy="724" r="4" />
        <circle cx="893" cy="724" r="4" />
        <circle cx="1074" cy="607" r="4" />
        <circle cx="1129" cy="607" r="4" />
        <circle cx="684" cy="902" r="5" />
        <circle cx="944" cy="758" r="5" />
        <circle cx="1086" cy="688" r="5" />
        <circle cx="1204" cy="618" r="5" />
        <circle cx="1204" cy="712" r="5" />
        <circle cx="1204" cy="829" r="5" />
        <circle cx="1204" cy="901" r="5" />
      </g>
      <g fill="#3a3238" fontSize="36" fontFamily="Liberation Sans, sans-serif">
        {diagramLabels.map(([text, x, y]) => (
          <text key={`${text}-${y}`} x={x} y={y}>
            {text}
          </text>
        ))}
        <text x="846" y="1001" fontSize="25" fontWeight="700">
          A-A
        </text>
      </g>
    </svg>
  );
}

const diagramLabels: [string, number, number][] = [
  ['b', 644, 300],
  ['r1', 774, 341],
  ['r2', 950, 341],
  ['π1', 679, 441],
  ['π3', 1036, 441],
  ['φ1', 590, 528],
  ['L1', 859, 538],
  ['φ2', 1142, 528],
  ['π3', 1077, 598],
  ['ρ3', 996, 654],
  ['H3', 1214, 678],
  ['h3', 1103, 710],
  ['π2', 853, 713],
  ['ρ2', 776, 770],
  ['h2', 958, 781],
  ['H2', 1216, 785],
  ['Asπ', 653, 766],
  ['π1', 679, 809],
  ['ρ1', 595, 866],
  ['Asκ', 812, 879],
  ['H1', 1215, 879],
  ['h1', 692, 932],
];

const plate = (fill: string) => <path d="M1 1h14v14H1z" fill={fill} stroke="#3b2420" strokeWidth="1.400" />;
const redStep = (
  <>
    <path d="M2 1h12v7H2z" fill="#f0a0a0" stroke="#d02030" />
    <path d="M2 4.500h12M8 8v5M4 10h8" stroke="#d02030" strokeWidth="1.300" />
    <path d="M2 8v5h12V8" stroke="#b03030" />
    <path d="M0 13.500h4M12 13.500h4M2 11.500v4M14 11.500v4" stroke="#38b048" />
  </>
);

const insertTools: { name: string; caret?: boolean; sep?: boolean; art: ReactNode }[] = [
  {
    name: 'Πλάκα',
    caret: true,
    art: (
      <>
        {plate('#f5dfb8')}
        <path d="M8 3v10M3 8h10" stroke="#4a2a20" />
        <circle cx="8" cy="8" r="2.500" fill="#f5dfb8" stroke="#4a2a20" />
      </>
    ),
  },
  {
    name: 'Πρόβολος',
    art: (
      <>
        <path d="M3.500 1.500h9v10h-9zM2 1.500h12" fill="#f5dfb8" stroke="#3b2420" />
        <circle cx="8" cy="7" r="2.200" stroke="#4a2a20" />
        <path d="M8 3v4" stroke="#4a2a20" />
      </>
    ),
  },
  {
    name: 'Δοκιδωτή',
    caret: true,
    sep: true,
    art: (
      <>
        {plate('#f5dfb8')}
        <path d="M3.500 3.500h3v3.500h-3zM9.500 3.500h3v3.500h-3zM3.500 9.500h3v3h-3zM9.500 9.500h3v3h-3z" fill="#fff" stroke="#3b2420" />
      </>
    ),
  },
  {
    name: 'Πέδιλο',
    caret: true,
    art: (
      <>
        {plate('#b8b0a8')}
        <path d="m1 1 5 5M15 1l-5 5M1 15l5-5M15 15l-5-5" stroke="#333" />
        <path d="M5.500 5.500h5v5h-5z" fill="#8fd08f" stroke="#2f5a2f" />
      </>
    ),
  },
  {
    name: 'Κεφαλόδεσμος',
    caret: true,
    sep: true,
    art: (
      <>
        {plate('#c4bab0')}
        <path d="M5.500 5.500h5v5h-5z" fill="#efe4d8" stroke="#3b2420" />
      </>
    ),
  },
  {
    name: 'Εσχάρα',
    sep: true,
    art: (
      <>
        {plate('#f5dfb8')}
        <path d="M4.500 1v14M8 1v14M11.500 1v14M1 4.500h14M1 8h14M1 11.500h14" stroke="#3b2420" />
      </>
    ),
  },
  {
    name: 'Κοιτόστρωση',
    sep: true,
    art: (
      <>
        {plate('#d820d8')}
        <path d="m2 2 12 12M14 2 2 14M5 8h6M8 5v6" stroke="#f6c6f6" strokeDasharray="2 1" />
      </>
    ),
  },
  {
    name: 'Οπή',
    sep: true,
    art: (
      <>
        <path d="M2 2h12v12H2z" fill="#947060" />
        <path d="m4 4 8 8M12 4l-8 8" stroke="#b08470" strokeDasharray="2 1" />
      </>
    ),
  },
  { name: 'Κλίμακα', caret: true, art: redStep },
  { name: 'Σκάλα', art: redStep },
];

const dockIcons: { name: string; active?: boolean; art: ReactNode }[] = [
  { name: 'Πληροφορίες', art: <path d="M6 6h3v7M6 13.500h5M7.500 2v2" stroke="#dcae58" strokeWidth="2" /> },
  {
    name: 'Στρώσεις',
    art: <path d="m1 3.500 7 2.500 7-3-7-2zM1 7.500 8 10l7-3M1 11.500 8 14l7-3" stroke="#5d7388" strokeWidth="1.400" />,
  },
  {
    name: 'Υποστυλώματα',
    art: (
      <>
        <path d="M1.500 1.500h6v7h7v6h-13zM2 6l4-4M2 10l5-5M2 14l6-6M7 14l5-5M11 14l3-3" stroke="#3b2a2a" />
        <path d="M11.500 1v7M8 4.500h7" stroke="#3aa07c" strokeWidth="2" />
      </>
    ),
  },
  {
    name: 'Πλάκες',
    active: true,
    art: (
      <>
        <path d="M1.500 3.500h11v11h-11z" fill="#dcdcdc" stroke="#5b1a20" strokeWidth="1.400" />
        <path d="m7 6 3 3-3 3-3-3zM7 4.500v2M7 11.500v2M2.500 9h2M9.500 9h2" stroke="#e03030" strokeWidth="1.300" />
        <path d="M12 0v7M8.500 3.500h7" stroke="#3aa07c" strokeWidth="2" />
      </>
    ),
  },
  {
    name: 'Διαγράμματα',
    art: (
      <>
        <path d="M1.500 1v13.500H15" stroke="#4a3030" strokeWidth="1.400" />
        <path d="M3 4c3 0 3 6 10 8M3 7c3 1 5 5 9 7" stroke="#b03838" />
        <path d="M9 5V1l3 4V1M13 1h2v3" stroke="#333" />
      </>
    ),
  },
  {
    name: 'Ιστογράμματα',
    art: (
      <>
        <path d="M1.500 3v11.500H15" stroke="#333" />
        <path d="M3 13h3v-3H3z" fill="#3aa055" />
        <path d="M6 13h4V8H6z" fill="#48b868" />
        <path d="M11 14h4V5h-4z" fill="#c02828" />
        <path d="M6.500 1v8M10.500 1v8" stroke="#333" strokeDasharray="1.500 1.500" />
      </>
    ),
  },
  {
    name: 'CR',
    art: (
      <>
        <text x="1" y="7.500" fontSize="9" fontWeight="700" fill="#2b4a86" fontFamily="Liberation Sans, sans-serif">
          CR
        </text>
        <path d="M2.500 9v6M9 9v6" stroke="#2fa08c" strokeWidth="2" />
        <path d="M5.500 9v6M12.500 9v6" stroke="#c84040" strokeWidth="2" />
      </>
    ),
  },
  {
    name: 'Έντυπα',
    art: <path d="M3.500 1.500h6l3.500 3.500v9.500H3.500zM5.500 6h5M5.500 8h5M5.500 10v3h5v-3zM8 10v3" stroke="#555" />,
  },
  {
    name: 'Υπολογισμοί',
    art: <path d="M1.500 1.500h13v13h-13zM4 4h3v2H4M4 8h3M9 4h2M9.500 8.500h4v5h-4zM9.500 11h4M4 12h3" stroke="#3b1a20" />,
  },
  {
    name: 'Χρώματα',
    art: (
      <>
        <path d="m8 8-4-7h8z" fill="#3bb44a" />
        <path d="m8 8 4-7 4 7z" fill="#e8c22e" />
        <path d="m8 8 8 0-4 7z" fill="#e0352f" />
        <path d="m8 8 4 7H4z" fill="#c033b0" />
        <path d="m8 8-4 7-4-7z" fill="#3055d8" />
        <path d="m8 8-8 0 4-7z" fill="#28a8d8" />
        <circle cx="8" cy="8" r="2" fill="#fff" />
      </>
    ),
  },
  {
    name: 'Οπλισμός',
    art: (
      <>
        <rect x="2.500" y="1.500" width="11" height="13" rx="1.500" stroke="#3b1a20" strokeWidth="1.300" />
        <path d="m9 5 3-3v3z" stroke="#3b1a20" />
      </>
    ),
  },
  {
    name: 'Περισσότερα',
    art: (
      <>
        <path d="m4 1 2.500 2.500L4 6M9 1l2.500 2.500L9 6" stroke="#666" />
        <path d="M5 11h6l-3 3z" fill="#666" />
      </>
    ),
  },
];

function StairPanel() {
  return (
    <aside className="relative flex w-[420px] shrink-0 flex-col bg-[#e6e6e6]">
      <div className="relative flex min-h-0 flex-1 flex-col pb-[11px]">
        <header className="flex h-[45px] shrink-0 items-start justify-between pt-[12px] pr-[7px] pl-[12px]">
          <h2 className="text-[20px] leading-6 text-[#58545a]">Εισαγωγή Κλίμακας</h2>
          <Icon size="h-[6px] w-[4px]" box="0 0 4 6">
            <path d="M4 0v6L0 3z" fill="#555" />
          </Icon>
        </header>
        <div className="mr-[7px] ml-[18px] flex h-[26px] shrink-0 items-center bg-[#f0f0f0] pb-[2px] pl-1">
          {insertTools.map((tool) => (
            <div key={tool.name} className="flex items-center">
              <button type="button" aria-label={tool.name} className={`flex items-center ${tool.caret ? 'gap-[5px]' : ''}`}>
                <Icon>{tool.art}</Icon>
                {tool.caret && <Caret />}
              </button>
              {tool.sep ? (
                <span className="mx-[7px] h-5 border-l border-[#ccc]" />
              ) : (
                <span className={tool.caret ? 'w-1' : 'w-2'} />
              )}
            </div>
          ))}
        </div>
        <div className="mr-[7px] ml-[18px] flex shrink-0 justify-center bg-[#efefef] pr-1">
          <StairDiagram />
        </div>
        <PropertyGrid />
        <div className="pointer-events-none absolute -top-[2px] right-[1px] bottom-0 left-[2px] border-[5px] border-[#ea151c] shadow-[inset_3px_3px_3px_#8f8f8f,1px_2px_2px_#9a9a9a]" />
      </div>
      <div className="mt-1 ml-2 h-[55px] shrink-0 bg-[#efefef]" />
      <div className="mt-1 ml-2 h-2 shrink-0 border-y-2 border-[#cdcdcd] bg-[#cdcdcd] pl-[184px]">
        <div className="h-1 w-14 border-t-3 border-dotted border-white" />
      </div>
      <div className="ml-2 flex h-[31px] shrink-0 items-center justify-end bg-[#efefef]">
        {dockIcons.map(({ name, active, art }) => (
          <button
            type="button"
            key={name}
            aria-label={name}
            className={`flex h-[30px] w-[26px] items-center justify-center ${active ? 'bg-[#cdcdcd]' : ''}`}
          >
            <Icon>{art}</Icon>
          </button>
        ))}
      </div>
      <svg
        viewBox="0 0 40 72"
        className="pointer-events-none absolute right-[219px] bottom-[30px] h-[72px] w-10 drop-shadow-[1px_2px_1px_#888]"
      >
        <path d="m4 8 8-4 14 42 7-3-2 27-19-20 7-2z" fill="#ee1318" />
      </svg>
    </aside>
  );
}

/* ---------- status bar ---------- */

function StatusBar() {
  return (
    <footer className="flex h-[22px] shrink-0 items-center border-t border-[#d4d4d4] bg-[#f1f1f1] pt-[2px] text-[11px] whitespace-nowrap text-[#444]">
      <a href="#" className="w-[456px] pl-2 text-[12px]">
        www.tol.com.gr
      </a>
      <button type="button" aria-label="Πίνακας" className="flex items-center gap-[2px]">
        <SheetIcon />
        <Chevron />
      </button>
      <button type="button" aria-label="Λίστα" className="ml-[6px]">
        <Icon>
          <path d="M0 3.500h2M4 3.500h12M0 8h4M6 8h10M0 12.500h2M4 12.500h12" stroke="#35609a" strokeWidth="2" />
        </Icon>
      </button>
      <span className="ml-[14px] w-[456px]">ΕΥΡΩΚΩΔΙΚΕΣ | Ιδιομορφική | Κ.Π.Μ. | q=1.00 | Σχεδιασμού | Τύπος 1</span>
      <span className="flex-1">Αποτίμηση-Ενισχύσεις | m-Τοπ.Συντ.Συμπ. | ΟΣ: ΚΑΝ.ΕΠΕ. | ΦΤ: EK8-3</span>
      <Icon>
        <path d="M5 7V5a3 3 0 0 1 6 0v2" stroke="#8a7a55" strokeWidth="1.600" />
        <path d="M2.500 7h11v7.500h-11z" fill="#e8b964" stroke="#9a7a3a" />
        <path d="M8 9v3" stroke="#5a3a10" strokeWidth="1.500" />
      </Icon>
      <span className="ml-[14px] w-[173px]">x=5.085 y=7.064 z=2.750 m</span>
      <button type="button" className="flex w-[66px] items-center gap-2">
        κάναβος <Chevron />
      </button>
      <button type="button" className="w-[35px] text-left">
        έλξη
      </button>
      <button type="button" className="w-[59px] text-left">
        dxf έλξη
      </button>
      <button type="button" className="w-[51px] text-left">
        κάθετα
      </button>
      <span className="flex items-center gap-2 pr-[3px] text-[#888]">
        <button type="button" aria-label="Σμίκρυνση" className="h-[2px] w-2 bg-[#999]" />
        <input
          type="range"
          aria-label="Ζουμ"
          defaultValue={50}
          className="h-4 w-[95px] appearance-none bg-[linear-gradient(#aaa,#aaa)] bg-[length:100%_1px] bg-center bg-no-repeat [&::-webkit-slider-thumb]:h-[13px] [&::-webkit-slider-thumb]:w-[5px] [&::-webkit-slider-thumb]:appearance-none [&::-webkit-slider-thumb]:border [&::-webkit-slider-thumb]:border-[#999] [&::-webkit-slider-thumb]:bg-[#eee]"
        />
        <button type="button" aria-label="Μεγέθυνση">
          <Icon size="h-2 w-2" box="0 0 8 8">
            <path d="M4 0v8M0 4h8" stroke="#999" strokeWidth="2" />
          </Icon>
        </button>
      </span>
    </footer>
  );
}

export default function App() {
  return (
    <div className="flex h-screen flex-col overflow-hidden bg-[#e6e6e6] font-['Noto_Sans','Open_Sans',sans-serif]">
      <TopBar />
      <Ribbon />
      <div className="flex min-h-0 flex-1">
        <div className="mr-[5px] flex w-[391px] shrink-0 flex-col">
          <DisplayPanel />
          <NavigationPanel />
        </div>
        <Workspace />
        <StairPanel />
      </div>
      <StatusBar />
    </div>
  );
}
